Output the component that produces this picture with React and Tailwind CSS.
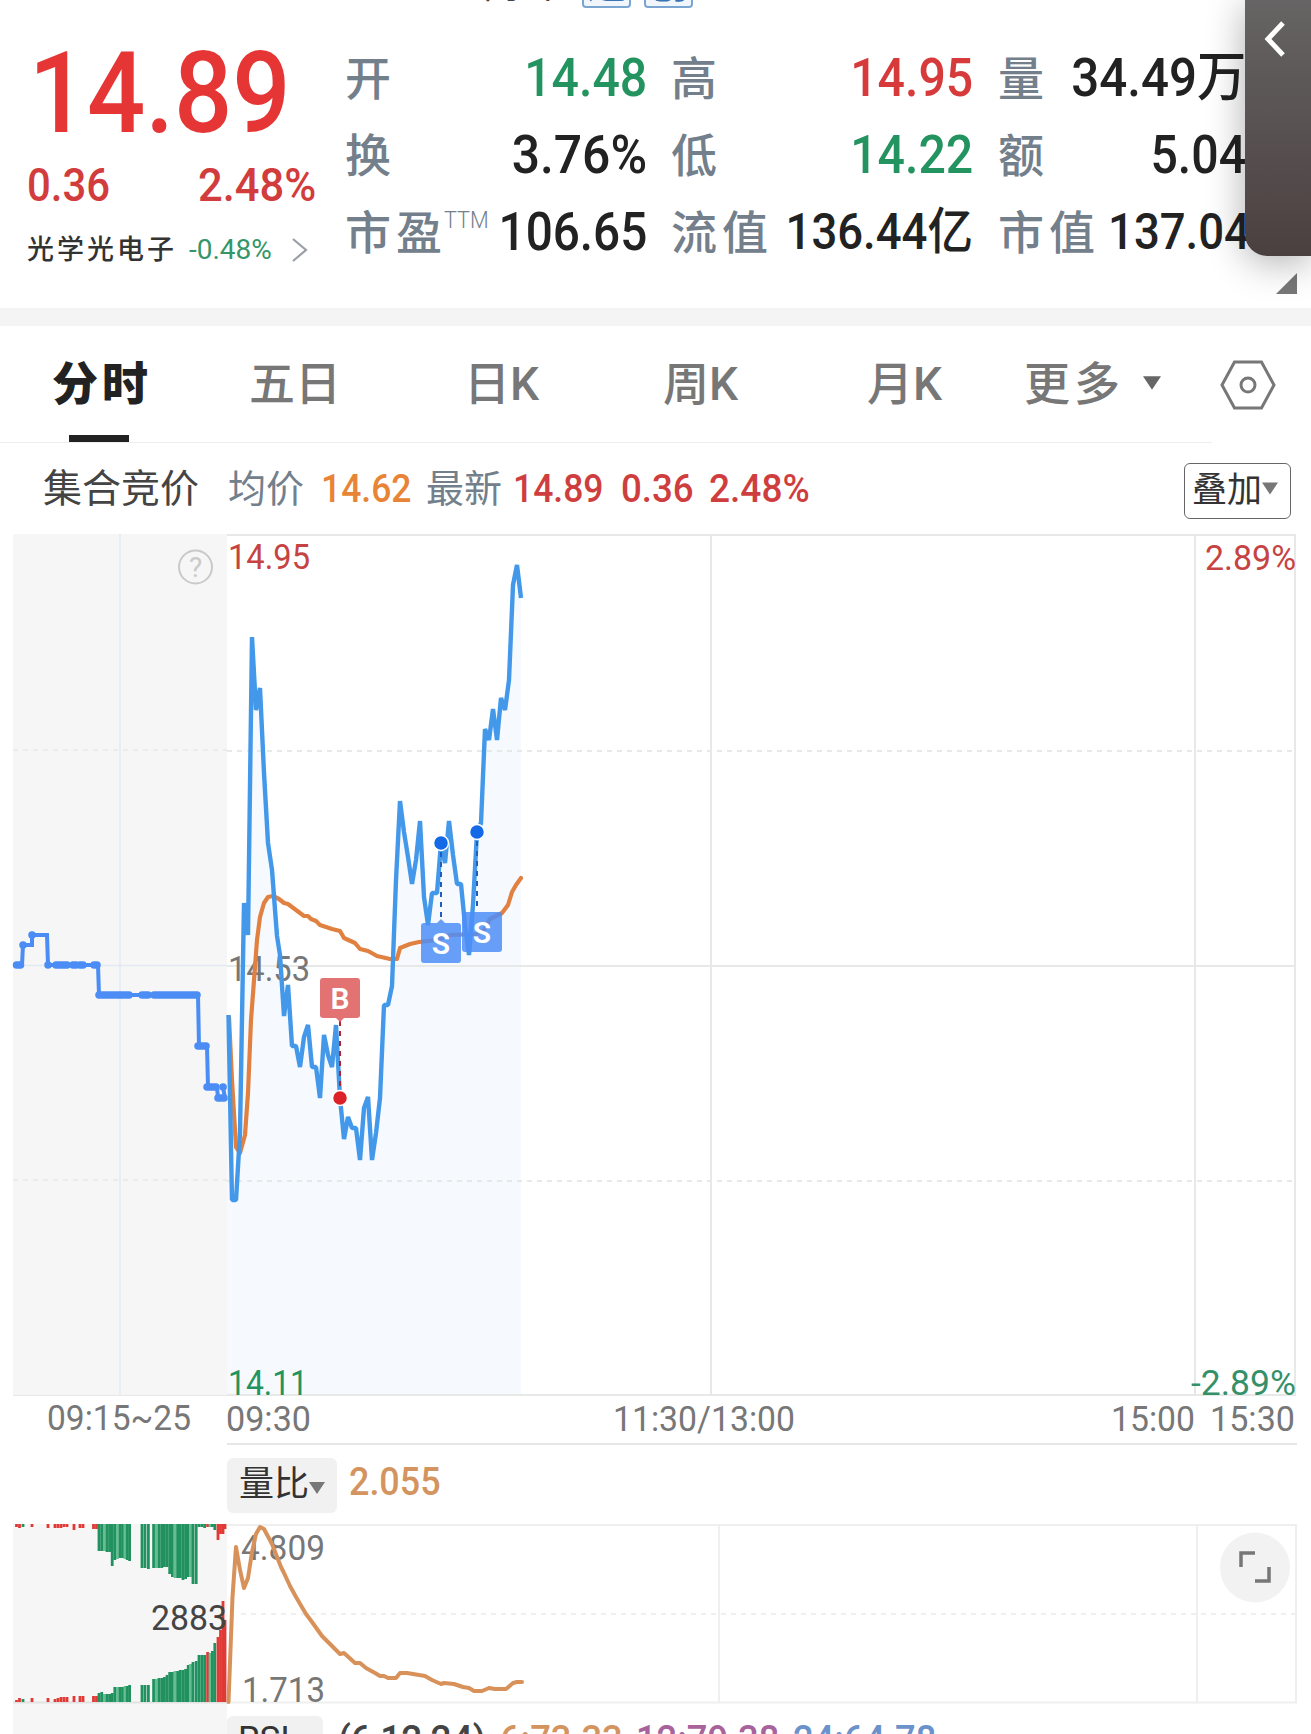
const GREEN = "#23935f";

const price = [
  [228.5, 1015], [232, 1200], [236, 1200], [240, 1133], [244, 903], [248, 935], [252, 637], [256, 710], [260, 688],
  [264, 773], [268, 843], [272, 870], [277, 936], [280, 955], [284, 1016], [288, 985], [292, 1046], [296, 1046],
  [300, 1067], [304, 1037], [308, 1025], [312, 1067], [316, 1067], [320, 1098], [324, 1035], [328, 1055], [332, 1067],
  [336, 1025], [340, 1098], [344, 1139], [348, 1117], [352, 1128], [356, 1128], [360, 1160], [364, 1108], [368, 1097],
  [372, 1160], [376, 1133], [380, 1098], [384, 1005], [388, 1005], [392, 986], [396, 880], [400, 801], [404, 832],
  [408, 857], [412, 884], [416, 860], [420, 821], [424, 897], [428, 925], [432, 893], [437, 893], [441, 843],
  [445, 863], [449, 821], [453, 855], [457, 884], [461, 884], [465, 925], [469, 955], [473, 905], [477, 832],
  [481, 823], [485, 729], [489, 740], [493, 709], [497, 740], [501, 698], [505, 710], [509, 680], [513, 585],
  [517, 565], [521, 598],
];

const average = [
  [229, 1017], [232, 1080], [236, 1147], [240, 1153], [245, 1135], [248, 1093], [251, 1020], [255, 967], [257, 940],
  [260, 917], [264, 903], [268, 897], [273, 896], [279, 899], [284, 903], [288, 904], [304, 916], [308, 916],
  [311, 919], [316, 921], [320, 925], [332, 929], [340, 931], [344, 938], [355, 943], [360, 949], [368, 951],
  [377, 956], [390, 959], [397, 959], [400, 948], [410, 944], [419, 942], [437, 940], [450, 935], [477, 934],
  [484, 930], [490, 919], [502, 913], [508, 905], [512, 892], [516, 885], [521, 878],
];

const ratio = [
  [228.5, 1702], [232.5, 1597], [236, 1547], [240, 1570], [244, 1588], [248, 1578], [252, 1552], [256, 1534],
  [260, 1527], [264, 1529], [272, 1544], [281, 1567], [284, 1573], [290, 1586], [296, 1597], [306, 1614], [312, 1622],
  [322, 1636], [340, 1654], [344, 1653], [355, 1663], [360, 1663], [366, 1668], [375, 1673], [380, 1676], [384, 1676],
  [388, 1678], [396, 1678], [400, 1673], [407, 1673], [425, 1676], [432, 1680], [441, 1684], [444, 1683], [454, 1684],
  [463, 1687], [469, 1688], [474, 1691], [482, 1691], [489, 1688], [495, 1689], [506, 1689], [513, 1683], [517, 1682],
  [522, 1682],
];

const auction = "M16 965H22L23 945H32V935H47L48 965H98L99 995H198L199 1046H207L208 1087H217L218 1098H225L223 1087";

// [from, to, y] of dense quote runs before the open
const auctionRuns = [
  [16.5, 20.5, 965], [23, 23.1, 945], [32, 32.1, 935], [48, 48.1, 965], [56, 67, 965], [73, 76, 965], [80, 83, 965],
  [94, 97, 965], [99, 129, 995], [142, 148, 995], [154, 197, 995], [198, 206, 1046], [207, 216, 1087],
  [218, 224, 1098], [223, 223.1, 1087],
];

// [x, bottom of upper bar, top of lower bar, colour]
const bars = [
  [16.5, 1527, 1700, "r"], [19.5, 1528, 1698, "r"], [23, 1527, 1699, "g"], [32, 1527, 1698, "r"],
  [48, 1528, 1698, "r"], [55, 1528, 1699, "r"], [58, 1528, 1698, "r"], [61, 1528, 1697, "r"], [64, 1527, 1697, "r"],
  [67, 1527, 1697, "r"], [74, 1530, 1696, "r"], [80, 1528, 1696, "r"], [83, 1528, 1696, "r"],
  [93.5, 1529, 1696, "r"], [96.5, 1529, 1696, "r"],
  [99, 1551, 1693, "g"], [101.7, 1551, 1692, "g"], [104.4, 1551, 1694, "l"], [107, 1552, 1694, "g"],
  [109.6, 1552, 1694, "g"], [112.2, 1566, 1693, "g"], [114.8, 1560, 1687, "g"], [117.4, 1559, 1687, "l"],
  [120, 1558, 1687, "g"], [122.5, 1558, 1687, "g"], [125, 1559, 1686, "l"], [127.3, 1560, 1686, "g"],
  [129.6, 1561, 1685, "g"],
  [142, 1568, 1685, "g"], [145, 1568, 1685, "g"], [148.4, 1569, 1685, "g"],
  [153.6, 1568, 1679, "g"], [156.3, 1568, 1679, "l"], [159, 1568, 1678, "g"], [161.7, 1568, 1678, "g"],
  [164.4, 1567, 1677, "g"], [167, 1567, 1675, "g"], [169.7, 1574, 1672, "g"], [172.4, 1577, 1672, "g"],
  [175, 1578, 1671, "l"], [177.6, 1578, 1671, "g"], [180.3, 1578, 1670, "g"], [183, 1580, 1670, "g"],
  [185.6, 1579, 1669, "g"], [188.2, 1577, 1665, "g"], [190.6, 1577, 1664, "l"], [193, 1584, 1662, "g"],
  [196.2, 1584, 1661, "g"], [199, 1527, 1655, "g"], [201.8, 1527, 1655, "g"], [204.6, 1528, 1655, "g"],
  [207.6, 1527, 1652, "r"], [210, 1527, 1653, "l"], [212.4, 1527, 1651, "g"], [214.8, 1530, 1643, "g"],
  [218, 1540, 1637, "r"], [220.5, 1534, 1630, "r"], [223, 1534, 1601, "r"], [225, 1529, 1620, "r"],
];

const barColors = { r: "#e03a36", g: "#21925f", l: "#66bd92" };

const toPath = (points) => "M" + points.map((p) => p.join(" ")).join("L");

// Narrow numerals anchored to a fixed width inside the charts
function Label({ x, y, width, size = 35, fill = "#777", weight = 400, children }) {
  return (
    <text x={x} y={y} fill={fill} fontSize={size} fontWeight={weight} textLength={width} lengthAdjust="spacingAndGlyphs">
      {children}
    </text>
  );
}

function Caret({ className = "", fill = "#777" }) {
  return (
    <svg viewBox="0 0 16 12" className={className}>
      <path d="M0 0H16L8 12Z" fill={fill} />
    </svg>
  );
}

function Name({ className = "", children }) {
  return (
    <span className={`shrink-0 pt-[2px] font-medium text-[#73808c] text-[46px] leading-[75px] tracking-[5px] ${className}`}>{children}</span>
  );
}

function Value({ className = "", children }) {
  return (
    <span className={`ml-auto shrink-0 origin-right whitespace-nowrap font-medium leading-[77px] ${className}`}>
      {children}
    </span>
  );
}

function Quote() {
  return (
    <div className="w-[345px] shrink-0 pl-[27px] pt-[29px]">
      <div className="h-[128px] origin-left scale-x-[0.9] pl-[2px] text-[114px] font-medium leading-[128px] text-[#e63535]">14.89</div>
      <div className="flex h-[56px] items-center text-[46px] font-medium leading-[56px] text-[#d23c3c]">
        <span className="w-[171px] origin-left scale-x-[0.91]">0.36</span>
        <span className="origin-left scale-x-[0.945]">2.48%</span>
      </div>
      <div className="mt-[16px] flex h-[42px] items-center">
        <span className="w-[162px] text-[27px] font-medium tracking-[3px] text-[#333]">光学光电子</span>
        <span className="w-[102px] text-[28px] text-[#35966a]">-0.48%</span>
        <svg viewBox="0 0 18 26" className="h-[26px] w-[18px]">
          <path d="M2 2L15 13L2 24" fill="none" stroke="#999fa5" strokeWidth="2.2" />
        </svg>
      </div>
    </div>
  );
}

function Stats() {
  return (
    <div className="flex grow pt-[40px]">
      <div className="w-[302px] shrink-0">
        <div className="flex"><Name>开</Name><Value className="scale-x-[0.91] text-[53px] text-[#23935f]">14.48</Value></div>
        <div className="flex"><Name>换</Name><Value className="scale-x-[0.94] text-[53px] text-[#222]">3.76%</Value></div>
        <div className="flex">
          <Name>市盈</Name>
          <span className="-ml-[3px] mt-2 w-[30px] origin-left scale-x-[0.9] text-[24px] font-light text-[#73808c]">TTM</span>
          <Value className="scale-x-[0.9] text-[53px] text-[#222]">106.65</Value>
        </div>
      </div>
      <div className="ml-[24px] w-[302px] shrink-0">
        <div className="flex"><Name>高</Name><Value className="scale-x-[0.91] text-[53px] text-[#d63a3a]">14.95</Value></div>
        <div className="flex"><Name>低</Name><Value className="scale-x-[0.91] text-[53px] text-[#23935f]">14.22</Value></div>
        <div className="flex"><Name className="-mr-[20px]">流值</Name><Value className="scale-x-[0.91] text-[50px] text-[#222]">136.44亿</Value></div>
      </div>
      <div className="ml-[25px] w-[276px] shrink-0">
        <div className="flex"><Name>量</Name><Value className="mr-[28px] scale-x-[0.93] text-[53px] text-[#222]">34.49万</Value></div>
        <div className="flex"><Name>额</Name><Value className="mr-[28px] scale-x-[0.91] text-[53px] text-[#222]">5.04</Value></div>
        <div className="flex"><Name className="-mr-[24px]">市值</Name><Value className="mr-[24px] scale-x-[0.91] text-[50px] text-[#222]">137.04</Value></div>
      </div>
    </div>
  );
}

function Tabs() {
  return (
    <nav className="relative flex h-[117px] items-center text-[46px] font-medium text-[#777]">
      <span className="ml-[52px] w-[197px] font-black tracking-[4px] text-[#222]">分时</span>
      <span className="w-[215px]">五日</span>
      <span className="w-[199px]">日K</span>
      <span className="w-[204px]">周K</span>
      <span className="w-[157px]">月K</span>
      <span className="w-[119px] tracking-[4px]">更多</span>
      <Caret className="-mt-1 h-[14px] w-[18px]" fill="#666" />
      <svg viewBox="0 0 56 50" className="ml-[59px] h-[50px] w-[56px]" fill="none" stroke="#777" strokeWidth="3">
        <path d="M14.500 2H41.500L54 25L41.500 48H14.500L2 25Z" />
        <circle cx="28" cy="25" r="7" />
      </svg>
      <i className="absolute bottom-[1px] left-[69px] h-[7px] w-[60px] bg-[#222]" />
      <i className="absolute bottom-0 left-0 h-px w-[1212px] bg-[#eee]" />
    </nav>
  );
}

function Summary() {
  return (
    <div className="flex h-[90px] items-center pt-[3px] text-[39px] font-medium">
      <span className="ml-[43px] w-[185px] font-normal text-[#444]">集合竞价</span>
      <span className="w-[93px] text-[38px] font-normal text-[#73808c]">均价</span>
      <span className="w-[105px] origin-left scale-x-[0.91] text-[#e88435]">14.62</span>
      <span className="w-[87px] text-[38px] font-normal text-[#73808c]">最新</span>
      <span className="w-[108px] origin-left scale-x-[0.91] text-[#cf3e3e]">14.89</span>
      <span className="w-[88px] origin-left scale-x-[0.94] text-[#cf3e3e]">0.36</span>
      <span className="origin-left scale-x-[0.95] text-[#cf3e3e]">2.48%</span>
      <button className="ml-auto mr-[20px] mt-[2px] flex h-[56px] w-[107px] items-center rounded-md border border-[#666] pl-[7px] font-normal text-[#333]">
        <span className="text-[35px] leading-none">叠加</span>
        <Caret className="-mt-1 h-[13px] w-[16px]" />
      </button>
    </div>
  );
}

function Marker({ x, y, fill, letter }) {
  return (
    <g>
      <rect x={x} y={y} width="40" height="40" rx="3" fill={fill} fillOpacity="0.85" />
      <text x={x + 20} y={y + 31} fill="#fff" fontSize="30" fontWeight="600" textAnchor="middle">{letter}</text>
    </g>
  );
}

function PriceChart() {
  return (
    <svg viewBox="0 533 1311 907" className="block h-[907px] w-[1311px]">
      <rect x="13" y="534" width="214" height="861" fill="#f6f6f6" />
      <g stroke="#e3e9f3" strokeWidth="1.5">
        <path d="M120 534V1395M13 965.500H227" />
        <path d="M13 750H227M13 1180H227" stroke="#e8e8ec" strokeDasharray="5 5" />
      </g>
      <path d={toPath(price) + "L521 1395H227V1015Z"} fill="#f6faff" />
      <g fill="none" stroke="#e7e9e7" strokeWidth="2">
        <path d="M227 535H1296M227 966H1296M227 1395H1296M711 535V1395M1195 535V1395M1295 535V1395" />
        <path d="M227 751H1296M227 1181H1296" strokeDasharray="5 5" />
        <path d="M13 1395.500H227" strokeWidth="1" />
      </g>
      <circle cx="195.500" cy="567" r="16.500" fill="none" stroke="#c9c9c9" strokeWidth="2" />
      <text x="195.500" y="577" fill="#c9c9c9" fontSize="28" textAnchor="middle">?</text>

      <g fill="none" stroke="#4b8df5">
        <path d={auction} strokeWidth="4" />
        {auctionRuns.map(([a, b, y], i) => (
          <path key={i} d={`M${a} ${y}H${b}`} strokeWidth="7.500" strokeLinecap="round" />
        ))}
      </g>

      <Label x="228" y="981" width="82">14.53</Label>
      <path d={toPath(average)} fill="none" stroke="#e08142" strokeWidth="4.200" strokeLinejoin="round" strokeLinecap="round" />
      <path d={toPath(price)} fill="none" stroke="#4498ea" strokeWidth="4.400" strokeLinejoin="bevel" />

      <path d="M340 1021V1092" stroke="#b42430" strokeWidth="2" strokeDasharray="5 5" />
      <path d="M441 852V920M477 841V910" stroke="#1c5fc0" strokeWidth="2" strokeDasharray="5 5" />
      <path d="M336 1018H344L340 1022Z" fill="#e27474" />
      <path d="M437 923H445L441 919Z" fill="#6a9ff7" />
      <Marker x={320} y={978} fill="#de5a5a" letter="B" />
      <Marker x={421} y={923} fill="#4e8df7" letter="S" />
      <Marker x={462} y={912} fill="#4e8df7" letter="S" />
      <g stroke="#fff" strokeWidth="1.500">
        <circle cx="340" cy="1098" r="7.500" fill="#dc2228" />
        <circle cx="441" cy="843" r="7.500" fill="#1469e6" />
        <circle cx="477" cy="832" r="7.500" fill="#1469e6" />
      </g>

      <Label x="228" y="569" width="82" fill="#c64343">14.95</Label>
      <Label x="228" y="1395" width="80" fill={GREEN}>14.11</Label>
      <Label x="1205" y="570" width="91" fill="#c64343">2.89%</Label>
      <Label x="1191" y="1395" width="105" fill="#35906a">-2.89%</Label>

      <g>
        <Label x="47" y="1430" width="144">09:15~25</Label>
        <Label x="226" y="1431" width="85">09:30</Label>
        <Label x="613" y="1431" width="182">11:30/13:00</Label>
        <Label x="1111" y="1431" width="84">15:00</Label>
        <Label x="1210" y="1431" width="85">15:30</Label>
      </g>
    </svg>
  );
}

function RatioChart() {
  return (
    <svg viewBox="0 1523 1311 181" className="block h-[181px] w-[1311px]">
      <rect x="13" y="1524" width="214" height="180" fill="#f6f6f6" />
      <g fill="none" stroke="#efefef" strokeWidth="2">
        <path d="M227 1525H1296V1702.500H227M719 1525V1702M1197 1525V1702" />
        <path d="M241 1614H1296" strokeDasharray="5 5" />
        <path d="M13 1702.500H227" stroke="#e2e2e2" />
      </g>
      {bars.map(([x, top, bottom, c]) => (
        <path key={x} d={`M${x} 1524V${top}M${x} 1702V${bottom}`} stroke={barColors[c]} strokeWidth="2.800" />
      ))}
      <Label x="151" y="1630" width="76" fill="#444">2883</Label>
      <Label x="241" y="1560" width="84">4.809</Label>
      <Label x="242" y="1702" width="83">1.713</Label>
      <path d={toPath(ratio)} fill="none" stroke="#d9915a" strokeWidth="4" strokeLinejoin="round" strokeLinecap="round" />
      <circle cx="1255" cy="1567.500" r="35" fill="#f2f2f2" />
      <path d="M1241 1567V1553H1255M1255 1581H1269V1567" fill="none" stroke="#777" strokeWidth="3.500" />
    </svg>
  );
}

function Drawer() {
  return (
    <aside className="absolute right-0 top-0 h-[256px] w-[66px] rounded-bl-[22px] bg-linear-to-b from-[#666464] to-[#4b4040] shadow-[0_6px_38px_rgba(0,0,0,0.32)]">
      <svg viewBox="0 0 22 36" className="ml-[19px] mt-[21px] h-[36px] w-[22px]">
        <path d="M19 2L4 18L19 34" fill="none" stroke="#fff" strokeWidth="5" />
      </svg>
    </aside>
  );
}

export default function App() {
  return (
    <div className="relative h-[1734px] w-[1311px] overflow-hidden bg-white font-[Roboto,'Noto_Sans_CJK_SC',sans-serif]">
      <header className="relative h-[308px]">
        <div className="absolute left-[482px] top-[-38px] flex text-[38px] leading-[44px] text-[#444]">
          <span className="w-[100px]">商 卡</span>
          <span className="h-[46px] w-[49px] rounded border-2 border-[#7ba5d1] bg-[#f0f6fc] text-center leading-[42px] text-[#3b74b5]">通</span>
          <span className="ml-[13px] h-[46px] w-[49px] rounded border-2 border-[#7ba5d1] bg-[#f0f6fc] text-center leading-[42px] text-[#3b74b5]">创</span>
        </div>
        <div className="flex h-full">
          <Quote />
          <Stats />
        </div>
        <svg viewBox="0 0 21 21" className="absolute bottom-[14px] right-[14px] h-[21px] w-[21px]">
          <path d="M21 0V21H0Z" fill="#777" />
        </svg>
      </header>
      <div className="h-[18px] bg-[#f4f4f4]" />
      <Tabs />
      <Summary />
      <PriceChart />
      <div className="ml-[227px] mr-[14px] mt-[3px] -mb-[3px] h-[83px] border-t-2 border-[#e7e7e7]">
        <div className="flex pt-[13px]">
          <div className="flex h-[55px] w-[110px] items-center rounded-md bg-[#f1f1f1] pl-[12px]">
            <span className="-mt-[3px] text-[35px] leading-none text-[#333]">量比</span>
            <Caret className="mt-1 h-[12px] w-[16px]" />
          </div>
          <span className="ml-[12px] origin-left scale-x-[0.92] text-[39px] font-medium leading-[48px] text-[#d39460]">2.055</span>
        </div>
      </div>
      <RatioChart />
      <footer className="ml-[13px] flex h-[30px]">
        <div className="w-[214px] shrink-0 bg-[#f6f6f6]" />
        <div className="flex whitespace-nowrap pt-[12px] text-[39px] font-medium leading-[48px]">
          <div className="flex h-[55px] w-[96px] rounded-md bg-[#f1f1f1] pl-[11px] text-[35px] font-normal text-[#333]">
            RSI
          </div>
          <span className="ml-[15px] w-[162px] origin-left scale-x-[0.95] text-[#444]">(6,12,24)</span>
          <span className="w-[136px] origin-left scale-x-[0.93] text-[#d39460]">6:73.33</span>
          <span className="w-[157px] origin-left scale-x-[0.93] text-[#a8629c]">12:79.38</span>
          <span className="origin-left scale-x-[0.93] text-[#6b92cb]">24:64.78</span>
        </div>
      </footer>
      <Drawer />
    </div>
  );
}
